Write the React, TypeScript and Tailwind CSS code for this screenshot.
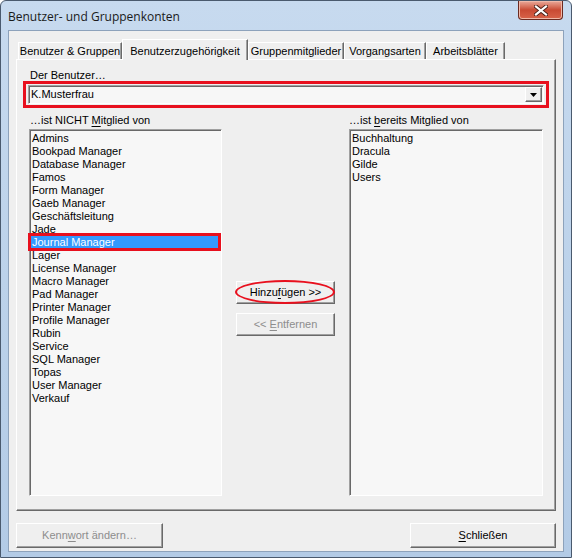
import React from "react";

const notMember = [
  "Admins",
  "Bookpad Manager",
  "Database Manager",
  "Famos",
  "Form Manager",
  "Gaeb Manager",
  "Geschäftsleitung",
  "Jade",
  "Journal Manager",
  "Lager",
  "License Manager",
  "Macro Manager",
  "Pad Manager",
  "Printer Manager",
  "Profile Manager",
  "Rubin",
  "Service",
  "SQL Manager",
  "Topas",
  "User Manager",
  "Verkauf",
];

const member = ["Buchhaltung", "Dracula", "Gilde", "Users"];

const tabs = [
  { label: "Benutzer & Gruppen", w: "w-[104px]" },
  { label: "Benutzerzugehörigkeit", w: "w-[126px]", active: true },
  { label: "Gruppenmitglieder", w: "w-[96px]" },
  { label: "Vorgangsarten", w: "w-[82px]" },
  { label: "Arbeitsblätter", w: "w-[79px]" },
];

const raised =
  "border border-t-white border-l-white border-r-[#696969] border-b-[#696969] shadow-[inset_-1px_-1px_0_#a0a0a0]";
const sunken =
  "border border-t-[#a0a0a0] border-l-[#a0a0a0] border-r-white border-b-white shadow-[inset_1px_1px_0_#696969]";

function Listbox({ items, selected }: { items: string[]; selected?: string }) {
  return (
    <div className={`h-[367px] bg-[#f7f7f7] px-[1px] pt-[2px] ${sunken}`}>
      {items.map((it) => (
        <div
          key={it}
          className={`relative h-[13px] leading-[13px] pl-[1px] whitespace-nowrap ${
            it === selected ? "bg-[#3399ff] text-white" : "text-black"
          }`}
        >
          {it}
          {it === selected && (
            <span className="absolute -left-[3px] -top-[3px] -right-[1px] -bottom-[2px] border-[3px] border-[#e8101e]" />
          )}
        </div>
      ))}
    </div>
  );
}

export default function App() {
  return (
    <div
      className="relative w-[572px] h-[558px] overflow-hidden rounded-t-[6px] border border-[#4a5a6e] bg-gradient-to-b from-[#c7daef] via-[#bcd2ea] to-[#b3cbe6] text-[11px] text-black"
      style={{ fontFamily: '"Liberation Sans", Arial, sans-serif' }}
    >
      {/* title bar */}
      <div className="flex h-[29px] items-start justify-between pl-[7px] pr-[8px]">
        <div className="pt-[7px] text-[12px] text-[#1a1a1a]" style={{ fontFamily: '"Open Sans", "Liberation Sans", sans-serif' }}>
          Benutzer- und Gruppenkonten
        </div>
        <div className="flex h-[19px] w-[45px] items-center justify-center rounded-b-[4px] border border-t-0 border-[#6b2a20] bg-gradient-to-b from-[#e9a99a] via-[#c94a33] to-[#d8634a] shadow-[inset_0_0_0_1px_#f0b8a8]">
          <svg width="14" height="11" viewBox="0 0 14 11">
            <path d="M2 1.5 L12 9.5 M12 1.5 L2 9.5" stroke="#4a2018" strokeWidth="4" strokeLinecap="square" />
            <path d="M2 1.5 L12 9.5 M12 1.5 L2 9.5" stroke="#ffffff" strokeWidth="2.2" strokeLinecap="square" />
          </svg>
        </div>
      </div>

      {/* client area */}
      <div className="mx-[7px] h-[522px] border border-[#8da2bb] bg-[#efefef] px-[7px] pt-[10px]">
        {/* tabs */}
        <div className="flex h-[18px] items-end pl-[2px]">
          {tabs.map((t) =>
            t.active ? (
              <div
                key={t.label}
                className={`relative z-10 -mb-[1px] flex h-[21px] ${t.w} items-start justify-center border-l border-t border-r border-t-white border-l-white border-r-[#696969] bg-[#efefef] pt-[3px] shadow-[inset_-1px_0_0_#a0a0a0]`}
              >
                {t.label}
              </div>
            ) : (
              <div
                key={t.label}
                className={`flex h-[17px] ${t.w} items-center justify-center border-l border-t border-r border-t-white border-l-white border-r-[#696969] shadow-[inset_-1px_0_0_#a0a0a0]`}
              >
                {t.label}
              </div>
            )
          )}
        </div>

        {/* panel */}
        <div className={`h-[452px] bg-[#efefef] px-[12px] ${raised}`}>
          <div className="pl-[1px] pt-[10px] leading-[11px]">Der Benutzer…</div>
          <div className="-mx-[6px] h-[27px] border-[3px] border-[#e8101e] px-[2px] py-[1px]">
            <div className={`flex h-[19px] items-center justify-between bg-[#f7f7f7] pl-[2px] pr-[1px] ${sunken}`}>
              <span>K.Musterfrau</span>
              <div className={`flex h-[15px] w-[17px] items-center justify-center bg-[#efefef] ${raised}`}>
                <svg width="7" height="4" viewBox="0 0 7 4">
                  <path d="M0 0 H7 L3.5 4 Z" fill="#000" />
                </svg>
              </div>
            </div>
          </div>

          <div className="mt-[6px] flex gap-[14px]">
            <div className="w-[193px]">
              <div className="h-[15px] pl-[1px] leading-[13px]">
                …ist NICHT <span className="underline underline-offset-2">M</span>itglied von
              </div>
              <Listbox items={notMember} selected="Journal Manager" />
            </div>

            <div className="flex w-[99px] flex-col pt-[167px]">
              <div className="relative">
                <button className={`h-[23px] w-[99px] bg-[#efefef] ${raised}`}>
                  Hinzu<span className="underline underline-offset-2">f</span>ügen &gt;&gt;
                </button>
                <span className="pointer-events-none absolute -left-[1px] -top-[1px] h-[24px] w-[100px] rounded-[50%] border-2 border-[#e8101e]" />
              </div>
              <button className={`mt-[9px] h-[23px] w-[99px] bg-[#efefef] text-[#8d8d8d] ${raised}`}>
                &lt;&lt; <span className="underline underline-offset-2">E</span>ntfernen
              </button>
            </div>

            <div className="w-[194px]">
              <div className="h-[15px] leading-[13px]">
                …ist <span className="underline underline-offset-2">b</span>ereits Mitglied von
              </div>
              <Listbox items={member} />
            </div>
          </div>
        </div>

        {/* bottom buttons */}
        <div className="mt-[12px] flex justify-between">
          <button className={`h-[25px] w-[147px] bg-[#efefef] text-[#8d8d8d] ${raised}`}>
            Kenn<span className="underline underline-offset-2">w</span>ort ändern…
          </button>
          <button className={`h-[25px] w-[146px] bg-[#efefef] ${raised}`}>
            <span className="underline underline-offset-2">S</span>chließen
          </button>
        </div>
      </div>
    </div>
  );
}
